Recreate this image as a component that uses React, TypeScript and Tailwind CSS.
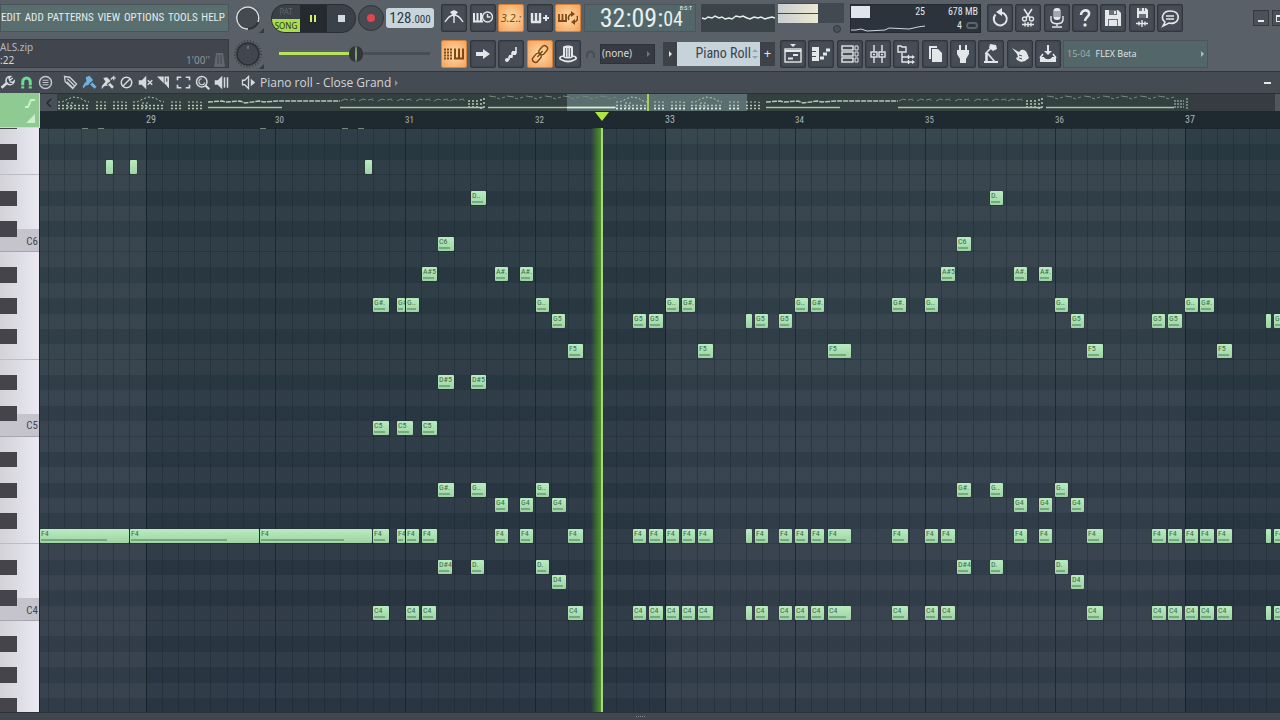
import { useState, type ReactNode } from "react";
import clsx from "clsx";

const NARROW = "font-['Roboto_Condensed','Open_Sans_Condensed','Liberation_Sans_Narrow','DejaVu_Sans_Condensed',sans-serif]";

const MENU = ["EDIT", "ADD", "PATTERNS", "VIEW", "OPTIONS", "TOOLS", "HELP"];

// ---------------------------------------------------------------- icons

function Icon({ children, size = 20, color }: { children: ReactNode; size?: number; color?: string }) {
  return (
    <svg
      width={size}
      height={size}
      viewBox="0 0 20 20"
      fill="none"
      stroke={color ?? "currentColor"}
      strokeWidth="1.4"
      className="shrink-0"
      aria-hidden="true"
    >
      {children}
    </svg>
  );
}

const solid = { fill: "currentColor", stroke: "none" };

const icons = {
  metronome: (
    <Icon>
      <path d="M1 14c3-5 5-7 9-7s6 2 9 7M10 5v10" />
      <path d="M6 4l4-2 4 2-4 5z" {...solid} />
    </Icon>
  ),
  wait: (
    <Icon>
      <path d="M1 5v8M4.500 5v8M8 5v8M0 13.500h10" strokeWidth="2" />
      <circle cx="14.500" cy="9" r="5" />
      <path d="M14.500 6v3h3" />
    </Icon>
  ),
  pianoPlus: (
    <Icon>
      <path d="M2 5v9M6 5v9M10 5v9M1 14h10" strokeWidth="2.4" />
      <path d="M13 10h6M16 7v6" strokeWidth="2" />
    </Icon>
  ),
  pianoLoop: (
    <Icon>
      <path d="M1 6v7M4.500 6v7M8 6v7M0 13h9" strokeWidth="1.800" />
      <path d="M11 12a4 4 0 0 1 3-6M19 8a4 4 0 0 1-3 6" strokeWidth="1.600" />
      <path d="M13 3l4 3-4 3zM17 11l-4 3 4 3z" {...solid} />
    </Icon>
  ),
  typing: (
    <Icon>
      <path d="M0 5.500h9M0 8.500h9M0 11.500h9M0 14.500h9" strokeWidth="2" strokeDasharray="2 1" />
      <path d="M11 4.500v10M15 4.500v10M19 4.500v10M10 14.500h10" strokeWidth="2" />
    </Icon>
  ),
  arrow: (
    <Icon>
      <path d="M3 8h7V5l7 5-7 5v-3H3z" {...solid} />
    </Icon>
  ),
  note: (
    <Icon>
      <path d="M15 3v6h-4v4H8v3" strokeWidth="1.600" />
      <path d="M11 7h4v4h-4zM8 11h3v3H8z" {...solid} />
      <circle cx="6" cy="16" r="2" {...solid} />
    </Icon>
  ),
  link: (
    <Icon>
      <g transform="rotate(-50 10 10)">
        <rect x="0" y="7" width="10" height="6" rx="3" />
        <rect x="10" y="7" width="10" height="6" rx="3" />
        <path d="M6 10h8" />
      </g>
    </Icon>
  ),
  hat: (
    <Icon>
      <path d="M5 13V3c1-2 9-2 10 0v10c-2 2-8 2-10 0z" {...solid} />
      <path d="M7.500 4v9M10 4v9M12.500 4v9" stroke="#474d56" strokeWidth="0.800" />
      <path d="M5 12c-4 1-4 3-1 4 4 2 8 2 12 0 3-1 3-3-1-4" strokeWidth="1.800" />
    </Icon>
  ),
  playlist: (
    <Icon>
      <path d="M7 0h6l-3 3z" {...solid} />
      <rect x="2" y="5" width="16" height="13" />
      <path d="M2 7h16M10 11h5M5 14.500h5" strokeWidth="2" />
    </Icon>
  ),
  pianoRoll: (
    <Icon>
      <path d="M1 3h7v14H1v-4h4v-1H1V8h4V7H1z" {...solid} />
      <path d="M9 14h4M12 10h4M15 6h4" strokeWidth="2.800" />
    </Icon>
  ),
  rack: (
    <Icon>
      <rect x="2" y="2" width="11" height="4" />
      <rect x="2" y="8" width="11" height="4" />
      <rect x="2" y="14" width="11" height="4" />
      <path d="M15 2h3v4h-3zM15 8h3v4h-3zM15 14h3v4h-3z" strokeWidth="1" />
    </Icon>
  ),
  mixer: (
    <Icon>
      <path d="M6 1v18M14 1v18" />
      <rect x="3" y="8" width="6" height="5" fill="#474d56" />
      <rect x="11" y="8" width="6" height="5" fill="#474d56" />
      <path d="M5 10.500h2M13 10.500h2" />
    </Icon>
  ),
  browser: (
    <Icon>
      <path d="M2 2h3l1 1h4v5H2zM6 9v9h5M6 13h5" />
      <path d="M11 13h6M11 18h6M12.500 11v4M12.500 16v4" />
      <path d="M16 11l3 2-3 2zM16 16l3 2-3 2z" {...solid} />
    </Icon>
  ),
  files: (
    <Icon>
      <path d="M4 2h8v2H6v11H4z" {...solid} />
      <path d="M7 5h6l4 4v9H7z" {...solid} />
    </Icon>
  ),
  plug: (
    <Icon>
      <path d="M6 1h2v5h4V1h2v5h2v4l-3 5v4H7v-4l-3-5V6h2z" {...solid} />
    </Icon>
  ),
  piston: (
    <Icon>
      <path d="M9 0l6 1 1 4-4 2-4-3z" {...solid} />
      <path d="M10 4L5 9l2 1 7 8" strokeWidth="1.600" />
      <path d="M5.500 9v8" strokeWidth="2.600" />
      <path d="M3 18h14" strokeWidth="2" />
    </Icon>
  ),
  hand: (
    <Icon>
      <path d="M2 4l7 4 2-2c3-1 5 1 6 3l2 5-4 3-4 1-4-2-1-2 2-1-1-3z" {...solid} />
      <path d="M9 11l3 1M9 14l3 1" stroke="#474d56" strokeWidth="1" />
    </Icon>
  ),
  download: (
    <Icon>
      <path d="M9 1h2v6h3l-4 4-4-4h3z" {...solid} />
      <path d="M5 10l-3 4M15 10l3 4" strokeWidth="1.600" />
      <path d="M2 13h4c1 3 7 3 8 0h4v5H2z" {...solid} />
    </Icon>
  ),
  undo: (
    <Icon>
      <path d="M5.500 6.500a6.500 6.500 0 1 0 6-2" strokeWidth="2" />
      <path d="M12 0v8L6 4z" {...solid} />
    </Icon>
  ),
  scissors: (
    <Icon>
      <path d="M6 1l6 9M14 1l-6 9" strokeWidth="1.600" />
      <circle cx="6.500" cy="11" r="2" />
      <circle cx="13.500" cy="11" r="2" />
      <path d="M4 16.500h12M7 14.500v4M10 14v5M13 14.500v4" />
    </Icon>
  ),
  mic: (
    <Icon>
      <rect x="6.500" y="0" width="7" height="12" rx="3" {...solid} />
      <path d="M4 8v4c1 5 11 5 12 0V8M10 15v3M5 19h10" />
      <path d="M7 4h6M7 6h6M7 8h6" stroke="#474d56" strokeWidth="0.800" />
    </Icon>
  ),
  help: (
    <Icon>
      <path d="M6 7c0-6 9-6 8-1 0 3-4 3-4 7" strokeWidth="2.600" />
      <circle cx="10" cy="17" r="1.700" {...solid} />
    </Icon>
  ),
  save: (
    <Icon>
      <path d="M2 2h13l3 3v13H2z" {...solid} />
      <path d="M6 2h8v5H6zM5 11h10v7H5z" fill="#6b7076" stroke="none" />
      <path d="M11 3h2v3h-2zM6 12h8v6H6z" {...solid} />
    </Icon>
  ),
  saveWave: (
    <Icon>
      <path d="M5 0h9l2 2v8H5z" {...solid} />
      <path d="M7 0h6v3H7zM7 6h7v4H7z" fill="#6b7076" stroke="none" />
      <path d="M10 0h2v3h-2z" {...solid} />
      <path d="M4 15.500h12M7 13.500v4M10 12v7M13 13.500v4" />
    </Icon>
  ),
  chat: (
    <Icon>
      <path d="M5 14C0 10 3 3 10 3s9 4 8 8c-1 4-6 5-9 4l-6 3z" strokeWidth="1.600" />
      <path d="M6 8h8M6 11h8" />
    </Icon>
  ),
};

const tools: { name: string; icon: ReactNode }[] = [
  {
    name: "Options",
    icon: (
      <Icon size={15} color="#d5dadd">
        <path d="M2 17l8-7" strokeWidth="3.500" />
        <path d="M17 4l-4 3-1-3 2-2a5.500 5.500 0 1 0 5 6l-2 2-4-1" strokeWidth="2" />
      </Icon>
    ),
  },
  {
    name: "Snap",
    icon: (
      <Icon size={15} color="#6fdc95">
        <path d="M5 18V9a5 5 0 0 1 10 0v9" strokeWidth="4" />
        <path d="M2 14.500h6M12 14.500h6" stroke="#41474e" strokeWidth="1.200" />
      </Icon>
    ),
  },
  {
    name: "Menu",
    icon: (
      <Icon size={15} color="#c3c8cc">
        <circle cx="10" cy="10" r="8" strokeWidth="2" />
        <path d="M6 7h8M6 10h8M6 13h8" strokeWidth="1.600" />
      </Icon>
    ),
  },
  {
    name: "Draw",
    icon: (
      <Icon size={15} color="#ccd1d5">
        <path d="M2 2l7 1 9 9-5 6-10-9zM5 9l8 8M6 5l9 9" strokeWidth="1.800" />
      </Icon>
    ),
  },
  {
    name: "Paint",
    icon: (
      <Icon size={15} color="#6fb3dc">
        <path d="M5 3l5-2 5 6-1 4-3 2-6 1-3 4-1-3 3-5 2-1z" fill="#6fb3dc" stroke="none" />
        <path d="M12 11l6 6" strokeWidth="4" />
        <path d="M9 13l7-6" stroke="#41474e" />
      </Icon>
    ),
  },
  {
    name: "Paint drum sequence",
    icon: (
      <Icon size={15} color="#d5dadd">
        <path d="M3 4l5-1 5 5-1 4-3 2-5 1-3 4v-4l3-4 2-2z" fill="#d5dadd" stroke="none" />
        <path d="M11 12l5 5" strokeWidth="3.500" />
        <path d="M8 13l6-5" stroke="#41474e" />
        <path d="M13 6l3-3M14 4h6M17 1v6" strokeWidth="1.600" />
      </Icon>
    ),
  },
  {
    name: "Delete",
    icon: (
      <Icon size={15} color="#d5dadd">
        <circle cx="10" cy="10" r="7" strokeWidth="2" />
        <path d="M5 15L15 5" strokeWidth="2" />
      </Icon>
    ),
  },
  {
    name: "Mute",
    icon: (
      <Icon size={15} color="#d5dadd">
        <path d="M1 7h4l6-6v18l-6-6H1z" fill="#d5dadd" stroke="none" />
        <path d="M13 7l6 6M19 7l-6 6" strokeWidth="2" />
      </Icon>
    ),
  },
  {
    name: "Slice",
    icon: (
      <Icon size={15} color="#d5dadd">
        <path d="M0 2h9v9z" fill="#d5dadd" stroke="none" />
        <path d="M10 2h6v16l-6-7z" fill="#d5dadd" stroke="none" />
        <path d="M13 4v5" stroke="#41474e" />
      </Icon>
    ),
  },
  {
    name: "Select",
    icon: (
      <Icon size={15} color="#d5dadd">
        <path d="M2 7V3h5M13 3h5v4M18 13v4h-5M7 17H2v-4" strokeWidth="2.200" />
      </Icon>
    ),
  },
  {
    name: "Zoom",
    icon: (
      <Icon size={15} color="#d5dadd">
        <circle cx="9" cy="9" r="7" strokeWidth="2" />
        <path d="M14 14l5 5" strokeWidth="3" />
        <path d="M9 5a4 4 0 1 0 4 5" strokeWidth="1.400" />
      </Icon>
    ),
  },
  {
    name: "Playback",
    icon: (
      <Icon size={15} color="#d5dadd">
        <path d="M1 7h4l6-6v18l-6-6H1z" fill="#d5dadd" stroke="none" />
        <path d="M14 3v14M18 3v14" strokeWidth="2" />
      </Icon>
    ),
  },
];

// ---------------------------------------------------------------- toolbar pieces

function ToolButton({ label, active, children }: { label: string; active?: boolean; children: ReactNode }) {
  return (
    <button
      type="button"
      aria-label={label}
      className={clsx(
        "flex h-7 w-[26px] items-center justify-center rounded-[2px] border",
        active
          ? "border-[#d9823a] bg-radial from-[#ffdcaa] to-[#f3a25a] text-[#7c4a16]"
          : "border-[#31363d] bg-[#474d56] text-[#e3e7ea] shadow-[inset_0_0_2px_#2c3138]"
      )}
    >
      {children}
    </button>
  );
}

function Knob({ ring }: { ring?: boolean }) {
  return (
    <div className="flex w-[38px] shrink-0 justify-center">
      <svg width="32" height="32" viewBox="0 0 32 32" aria-hidden="true">
        {ring ? (
          <>
            <circle cx="16" cy="16" r="11" fill="#444a52" stroke="#2f343a" strokeWidth="2" />
            <path d="M16 27A11 11 0 1 1 26 20" fill="none" stroke="#d8dde0" strokeWidth="1.500" />
          </>
        ) : (
          <>
            <circle cx="16" cy="16" r="13" fill="none" stroke="#3c4249" strokeWidth="2" strokeDasharray="1 2" />
            <circle cx="16" cy="16" r="11" fill="#40464e" stroke="#2b3036" strokeWidth="1.500" />
            <path d="M16 8v3" stroke="#8c949a" />
          </>
        )}
        <path d="M32 26v5h-5z" fill="#363b42" />
      </svg>
    </div>
  );
}

function TransportRow() {
  const [mode, setMode] = useState<"PAT" | "SONG">("SONG");

  return (
    <div className="flex h-9 items-center">
      <nav
        className={`flex h-7 w-[229px] shrink-0 items-center justify-between border border-[#4a5659] bg-[#596e6e] pr-[3px] text-[11px] text-[#e4eceb] ${NARROW}`}
      >
        {MENU.map((m) => (
          <button key={m} type="button">
            {m}
          </button>
        ))}
      </nav>
      <Knob ring />
      <div className="flex w-[170px] shrink-0 items-center gap-[2px] pl-1">
        <div className="flex h-[29px] w-[85px] overflow-hidden rounded-[14px] border border-[#2a2f35] bg-[#3b4148]">
          <div className="flex w-7 flex-col text-[8px] leading-[13px]">
            <button type="button" className="h-[14px] text-[#5d646b]" onClick={() => setMode("PAT")}>
              PAT
            </button>
            <button
              type="button"
              className={clsx("h-[13px]", mode === "SONG" ? "bg-[#a9dd4c] text-[#26341a]" : "text-[#5d646b]")}
              onClick={() => setMode("SONG")}
            >
              SONG
            </button>
          </div>
          <button type="button" aria-label="Pause" className="flex w-[26px] items-center justify-center gap-[2px] bg-[#252a30]">
            <span className="h-[7px] w-[2px] bg-[#d4ee6a]" />
            <span className="h-[7px] w-[2px] bg-[#d4ee6a]" />
          </button>
          <button type="button" aria-label="Stop" className="flex flex-1 items-center justify-center border-l border-[#252a30]">
            <span className="size-[7px] bg-[#d3dae2]" />
          </button>
        </div>
        <button
          type="button"
          aria-label="Record"
          className="flex size-[26px] items-center justify-center rounded-full border border-[#2f343a] bg-[#474c53]"
        >
          <span className="size-2 rounded-full bg-[#e0474c]" />
        </button>
        <button
          type="button"
          aria-label="Tempo"
          className={`flex h-5 w-12 items-baseline justify-center rounded-[3px] bg-[#c9d5dc] text-[15px] leading-5 text-[#303a44] ${NARROW}`}
        >
          128<span className="text-[11px]">.000</span>
        </button>
      </div>
      <div className="ml-1 flex w-[140px] shrink-0 justify-between">
        <ToolButton label="Metronome">{icons.metronome}</ToolButton>
        <ToolButton label="Wait for input">{icons.wait}</ToolButton>
        <ToolButton label="Countdown" active>
          <span className="text-[11px] italic">3.2.:</span>
        </ToolButton>
        <ToolButton label="Overdub">{icons.pianoPlus}</ToolButton>
        <ToolButton label="Loop record" active>
          {icons.pianoLoop}
        </ToolButton>
      </div>
      <div
        className={`relative ml-[3px] flex h-7 w-[112px] shrink-0 items-end justify-end border border-[#4a5659] bg-[#53676a] pr-3 text-[26px] leading-[26px] text-[#e6eeee] ${NARROW}`}
      >
        32:09:<span className="text-[20px] leading-6">04</span>
        <span className="absolute top-0 right-[3px] text-[6px] leading-[6px]">B:S:T</span>
      </div>
      <svg width="74" height="28" viewBox="0 0 74 28" className="ml-[5px] shrink-0 bg-[#3b4549]" aria-hidden="true">
        <path
          d="M1 14l3 1 3-2 4 1 3-2 4 2 3-1 3 2 4-1 3 1 4-3 4 1 3-1 4 2 3 1 4-2 4 1 3-1 4 2 3-1 4-1 3 1"
          fill="none"
          stroke="#e8eeee"
          strokeWidth="1.500"
        />
      </svg>
      <div className="ml-[3px] flex h-[30px] w-[66px] shrink-0 flex-col items-end justify-between">
        <div className="flex h-5 w-full flex-col gap-px bg-[#434950] pt-px">
          <span className="h-[9px] w-10 bg-linear-to-r from-[#c9cdd0] to-[#ece8d2]" />
          <span className="h-[9px] w-10 bg-linear-to-r from-[#c9cdd0] to-[#ece8d2]" />
        </div>
        <span className="mr-[3px] size-2 rounded-full border border-[#33383f] bg-[#4b5158]" />
      </div>
      <div
        className={`ml-[6px] flex h-[29px] w-[131px] shrink-0 border border-[#232931] bg-[#2c333c] text-[10px] leading-[14px] text-[#e3e8ec] ${NARROW}`}
      >
        <div className="flex flex-1 flex-col justify-between">
          <div className="flex justify-between">
            <span className="mt-px h-3 w-[19px] bg-[#dfe4ee]" />
            <span>25</span>
          </div>
          <svg width="74" height="8" viewBox="0 0 74 8" aria-hidden="true">
            <path d="M0 6h5l5-1 6 2 18-1 4-2 20 1 9-2 7-1" fill="none" stroke="#cfd6db" />
          </svg>
        </div>
        <div className="flex w-[55px] flex-col items-end pr-[2px]">
          <span>678 MB</span>
          <span className="flex items-center gap-1">
            4
            <span className="h-[7px] w-3 rounded-full border-2 border-[#5c636a]" />
          </span>
        </div>
      </div>
      <div className="ml-[6px] flex w-[196px] shrink-0 justify-between">
        <ToolButton label="Undo">{icons.undo}</ToolButton>
        <ToolButton label="Cut">{icons.scissors}</ToolButton>
        <ToolButton label="Record audio">{icons.mic}</ToolButton>
        <ToolButton label="Help">{icons.help}</ToolButton>
        <ToolButton label="Save">{icons.save}</ToolButton>
        <ToolButton label="Render">{icons.saveWave}</ToolButton>
        <ToolButton label="Feedback">{icons.chat}</ToolButton>
      </div>
      <div className="ml-[70px] flex shrink-0 gap-[3px]">
        <button type="button" aria-label="Minimize" className="flex size-4 items-end justify-center border border-[#353a41] bg-[#4b5159] pb-[3px]">
          <span className="h-[2px] w-[6px] bg-[#e8ecef]" />
        </button>
        <button type="button" aria-label="Maximize" className="flex size-4 items-center justify-center border border-[#353a41] bg-[#4b5159]">
          <span className="h-[7px] w-2 border border-t-2 border-[#e8ecef]" />
        </button>
      </div>
    </div>
  );
}

function PanelRow() {
  return (
    <div className="flex h-[35px] items-center">
      <div className="flex h-[29px] w-[229px] shrink-0 items-end justify-between border border-l-0 border-[#363b41] bg-[#41464e] pr-[3px] text-[10px] leading-[13px]">
        <div>
          <div className="text-[#b3b8bc]">ALS.zip</div>
          <div className="text-[#d3d7da]">:22</div>
        </div>
        <div className="flex items-end gap-1 text-[#8d9398]">
          1'00''
          <svg width="11" height="14" viewBox="0 0 11 14" fill="#61676e" aria-hidden="true">
            <path d="M2 0h7l2 14H0z" />
            <path d="M4 2v9M7 2v9" stroke="#41464e" />
          </svg>
        </div>
      </div>
      <Knob />
      <div className="flex w-[170px] shrink-0 items-center pl-3">
        <input
          type="range"
          aria-label="Main pitch"
          defaultValue={51}
          className="h-[3px] w-[151px] appearance-none bg-linear-to-r from-[#b9e35c] from-50% to-[#484e55] to-50% [&::-webkit-slider-thumb]:h-4 [&::-webkit-slider-thumb]:w-[14px] [&::-webkit-slider-thumb]:appearance-none [&::-webkit-slider-thumb]:rounded-full [&::-webkit-slider-thumb]:border-x-[6px] [&::-webkit-slider-thumb]:border-[#30363a] [&::-webkit-slider-thumb]:bg-[#7fa56a]"
        />
      </div>
      <div className="ml-1 flex w-[140px] shrink-0 justify-between">
        <ToolButton label="Typing keyboard" active>
          {icons.typing}
        </ToolButton>
        <ToolButton label="Step edit">{icons.arrow}</ToolButton>
        <ToolButton label="Note editing">{icons.note}</ToolButton>
        <ToolButton label="Multilink" active>
          {icons.link}
        </ToolButton>
        <ToolButton label="Talk">{icons.hat}</ToolButton>
      </div>
      <svg width="19" height="20" viewBox="0 0 19 20" fill="none" stroke="#474d54" strokeWidth="2" className="shrink-0" aria-hidden="true">
        <path d="M6 14v-3a3.500 3.500 0 0 1 7 0v3" />
      </svg>
      <div className="flex h-5 w-[55px] shrink-0 items-center border border-[#2d3238] bg-[#363b43] pr-1 pl-px">
        <select aria-label="Snap" className="min-w-0 flex-1 appearance-none text-[10px] text-[#d5d9dc]">
          <option>(none)</option>
        </select>
        <span className="border-y-[3px] border-l-[3px] border-y-transparent border-l-[#727980]" />
      </div>
      <button type="button" aria-label="Previous pattern" className="ml-2 flex h-6 w-[14px] shrink-0 items-center justify-center bg-[#3d4249]">
        <span className="border-y-[3px] border-l-[3px] border-y-transparent border-l-[#e1e5e8]" />
      </button>
      <div className="flex h-6 w-[83px] shrink-0 items-center bg-[#c6d3da] pr-[2px]">
        <select
          aria-label="Pattern"
          className={`min-w-0 flex-1 appearance-none pr-px text-right [text-align-last:right] text-[14px] text-[#38434c] ${NARROW}`}
        >
          <option>Piano Roll</option>
        </select>
        <span className="flex flex-col gap-1">
          <span className="border-x-[3px] border-b-[3px] border-x-transparent border-b-[#93a4ae]" />
          <span className="border-x-[3px] border-t-[3px] border-x-transparent border-t-[#93a4ae]" />
        </span>
      </div>
      <button type="button" aria-label="Add pattern" className="flex h-6 w-[15px] shrink-0 items-center justify-center bg-[#3d4249] text-[13px] text-[#e1e5e8]">
        +
      </button>
      <div className="ml-[5px] flex w-[281px] shrink-0 justify-between">
        <ToolButton label="Playlist">{icons.playlist}</ToolButton>
        <ToolButton label="Piano roll">{icons.pianoRoll}</ToolButton>
        <ToolButton label="Channel rack">{icons.rack}</ToolButton>
        <ToolButton label="Mixer">{icons.mixer}</ToolButton>
        <ToolButton label="Browser">{icons.browser}</ToolButton>
        <ToolButton label="Project picker">{icons.files}</ToolButton>
        <ToolButton label="Plugin picker">{icons.plug}</ToolButton>
        <ToolButton label="Tempo tapper">{icons.piston}</ToolButton>
        <ToolButton label="Touch">{icons.hand}</ToolButton>
        <ToolButton label="Download">{icons.download}</ToolButton>
      </div>
      <a
        href="#news"
        className="ml-[2px] flex h-7 w-[145px] shrink-0 items-center gap-[5px] border border-[#4a5659] bg-[#53666a] px-[3px] font-['Open_Sans',sans-serif] text-[9px] text-[#e0e8e8]"
      >
        <span className="text-[#a3b0b1]">15-04</span>
        FLEX Beta
        <span className="ml-auto border-y-[3px] border-l-[3px] border-y-transparent border-l-[#aebbbb]" />
      </a>
    </div>
  );
}

// ---------------------------------------------------------------- overview strip

const DOT_GROUP = [
  [0, 31, true],
  [38, 50, false],
  [55, 70, false],
  [75, 106, true],
  [113, 125, false],
  [130, 145, false],
] as const;

function OverviewLoop({ x }: { x: number }) {
  return (
    <g transform={`translate(${x} 0)`}>
      {DOT_GROUP.map(([a, b, arc]) => (
        <g key={a} strokeDasharray="2 2">
          {arc ? (
            <path d={`M${a} 8h4l6-3 5-2 7 1 5 3 4 1M${a + 10} 8v6m4-6v6`} />
          ) : (
            <path d={`M${a} 8H${b - 3}l3 1`} />
          )}
          <path d={`M${a} 11.500H${b}M${a} 14.500H${b}`} strokeWidth="1.500" />
        </g>
      ))}
      <path d="M150 8l14-1 4 1 14-1 5 2 14-2 5 1 14-1h62" strokeWidth="1.500" strokeDasharray="5 1" />
      <path d="M150 13.500h74M282 13.500h144M430 13.500h128" stroke="#a6c7a2" strokeWidth="1.500" />
      <g stroke="#74877a">
        {[283, 301, 320, 339, 358, 376, 392].map((s) => (
          <path key={s} d={`M${s} 7l4-2 3 1m2 0l5-1m0 1v1`} />
        ))}
        {[431, 449, 468, 487, 505, 524, 542].map((s) => (
          <path key={s} d={`M${s} 2l7 1m1 1l3 1m2-1l3-1`} />
        ))}
      </g>
      <path d="M410 7h10M410 10h10M410 13h10M423 5v10M426 4v11" strokeWidth="1.500" strokeDasharray="2 2" />
    </g>
  );
}

function Overview() {
  return (
    <div className="flex h-[18px] border-t border-[#2c3338] bg-[#33403f]">
      <button type="button" aria-label="Scroll left" className="flex w-[17px] shrink-0 items-center justify-center bg-[#4a5058]">
        <svg width="6" height="10" viewBox="0 0 6 10" fill="none" stroke="#242a2f" strokeWidth="1.500" aria-hidden="true">
          <path d="M5 1L1 5l4 4" />
        </svg>
      </button>
      <svg height="17" className="min-w-0 flex-1" fill="none" stroke="#b3cab4" strokeWidth="1" aria-hidden="true">
        <rect x="510" y="0" width="180" height="17" fill="#5b6f70" stroke="none" />
        <rect x="1132" y="0" width="146" height="17" fill="#363c42" stroke="none" />
        <rect x="1218" y="0" width="60" height="17" fill="#50565e" stroke="none" />
        <OverviewLoop x={1} />
        <OverviewLoop x={559} />
        <path d="M510 13.500h48" stroke="#e2efdc" strokeWidth="1.500" />
        <path d="M559 14.500h31M597 14.500h12M614 14.500h15M634 14.500h31M672 14.500h12" stroke="#e6efe6" strokeWidth="1.500" strokeDasharray="2 2" />
        <path d="M1117 7h10M1117 10h10M1117 13h10M1130 4v11" strokeDasharray="2 1" />
        <path d="M591 0v17" stroke="#a5d152" strokeWidth="2" />
      </svg>
    </div>
  );
}

// ---------------------------------------------------------------- piano roll

const ROW = 15.375;
const BAR = 129.875;
const TOP_PITCH = 31; // semitones above C4
const LOW_PITCH = -6;
const PLAYHEAD = 561;

// y of the upper edge of a pitch row, inside the grid
const rowTop = (pitch: number) => Math.round(1 + (TOP_PITCH - pitch) * ROW);
// x of a bar line, inside the grid
const barX = (bar: number) => Math.floor(106 + (bar - 29) * BAR);

const BLACK = [1, 3, 6, 8, 10];
const mod12 = (n: number) => ((n % 12) + 12) % 12;

const PITCHES = Array.from({ length: TOP_PITCH - LOW_PITCH + 1 }, (_, i) => TOP_PITCH - i);

type Note = [x: number, width: number, label: string];

const NOTES: Record<number, Note[]> = {
  29: [[66, 7, ""], [90, 7, ""], [325, 7, ""]],
  27: [[431, 15, "D.."], [950, 13, "D."]],
  24: [[398, 16, "C6"], [917, 14, "C6"]],
  22: [[382, 15, "A#5"], [455, 13, "A#."], [480, 13, "A#."], [901, 14, "A#5"], [974, 13, "A#."], [999, 13, "A#."]],
  20: [
    [333, 16, "G#."], [357, 8, "G#"], [366, 13, "G.."], [496, 13, "G.."], [626, 13, "G.."], [642, 13, "G#."],
    [755, 13, "G.."], [771, 13, "G#."], [852, 14, "G#."], [885, 13, "G.."], [1015, 13, "G.."], [1145, 13, "G.."], [1160, 14, "G#."],
  ],
  19: [
    [512, 13, "G5"], [593, 13, "G5"], [609, 14, "G5"], [706, 6, ""], [715, 13, "G5"], [739, 13, "G5"],
    [1031, 13, "G5"], [1112, 13, "G5"], [1128, 14, "G5"], [1226, 5, ""], [1234, 13, "G5"],
  ],
  17: [[528, 15, "F5"], [658, 15, "F5"], [788, 23, "F5"], [1047, 16, "F5"], [1177, 15, "F5"]],
  15: [[398, 16, "D#5"], [431, 15, "D#5"]],
  12: [[333, 16, "C5"], [357, 16, "C5"], [382, 15, "C5"]],
  8: [[398, 16, "G#."], [431, 15, "G.."], [496, 13, "G.."], [917, 14, "G#."], [950, 13, "G.."], [1015, 13, "G.."]],
  7: [[455, 13, "G4"], [480, 13, "G4"], [512, 14, "G4"], [974, 13, "G4"], [999, 13, "G4"], [1031, 13, "G4"]],
  5: [
    [0, 89, "F4"], [90, 129, "F4"], [220, 112, "F4"], [333, 16, "F4"], [357, 8, "F4"], [366, 13, "F4"], [382, 15, "F4"],
    [455, 13, "F4"], [480, 13, "F4"], [528, 15, "F4"],
    [593, 13, "F4"], [609, 14, "F4"], [626, 13, "F4"], [642, 13, "F4"], [658, 15, "F4"], [706, 6, ""], [715, 13, "F4"],
    [739, 13, "F4"], [755, 13, "F4"], [771, 13, "F4"], [788, 23, "F4"], [852, 16, "F4"], [885, 13, "F4"], [901, 14, "F4"],
    [974, 13, "F4"], [999, 13, "F4"], [1047, 16, "F4"], [1112, 14, "F4"], [1128, 14, "F4"], [1145, 13, "F4"],
    [1160, 14, "F4"], [1177, 15, "F4"], [1226, 5, ""], [1234, 13, "F4"],
  ],
  3: [[398, 14, "D#4"], [431, 13, "D."], [496, 13, "D."], [917, 14, "D#4"], [950, 13, "D."], [1015, 13, "D."]],
  2: [[512, 14, "D4"], [1031, 13, "D4"]],
  0: [
    [333, 16, "C4"], [366, 13, "C4"], [382, 14, "C4"], [528, 15, "C4"],
    [593, 13, "C4"], [609, 14, "C4"], [626, 13, "C4"], [642, 13, "C4"], [658, 15, "C4"], [706, 6, ""], [715, 13, "C4"],
    [739, 13, "C4"], [755, 13, "C4"], [771, 13, "C4"], [788, 23, "C4"], [852, 16, "C4"], [885, 13, "C4"], [901, 14, "C4"],
    [1047, 16, "C4"], [1112, 14, "C4"], [1128, 14, "C4"], [1145, 13, "C4"], [1160, 14, "C4"], [1177, 15, "C4"],
    [1226, 5, ""], [1234, 13, "C4"],
  ],
};

function Keyboard() {
  return (
    <div className="h-full w-10 shrink-0 overflow-hidden border-r border-[#20272c] bg-linear-to-r from-[#d2d2d8] to-[#eae9f2]">
      <div className="h-px w-[17px] bg-[#45444b]" />
      {PITCHES.map((p) => {
        const n = mod12(p);
        return (
          <div key={p} className="flex" style={{ height: rowTop(p - 1) - rowTop(p) }}>
            {BLACK.includes(n) && <div className="w-[17px] bg-[#45444b]" />}
            <div
              className={clsx(
                "flex flex-1 items-start justify-end pr-px text-[11px] leading-[10px] text-[#45454c]",
                NARROW,
                n === 0 && "border-b border-[#a5a5ac] bg-[#c5c4cc]",
                n === 1 && "bg-linear-to-b from-transparent from-50% to-[#c5c4cc] to-50%",
                n === 5 && "border-b border-[#bdbdc5]"
              )}
            >
              {n === 0 && `C${4 + p / 12}`}
            </div>
          </div>
        );
      })}
    </div>
  );
}

function Ruler() {
  return (
    <div className={`relative h-[17px] overflow-hidden bg-[#1f2930] text-[#aab5bb] ${NARROW}`}>
      {[29, 30, 31, 32, 33, 34, 35, 36, 37].map((bar) => (
        <span
          key={bar}
          className={clsx("absolute top-[2px] leading-[14px]", bar % 4 === 1 ? "text-[10px]" : "text-[9px]")}
          style={{ left: barX(bar) }}
        >
          {bar}
        </span>
      ))}
      <span
        className="absolute top-px border-x-[7px] border-t-[9px] border-x-transparent border-t-[#aee83f]"
        style={{ left: PLAYHEAD - 6 }}
      />
    </div>
  );
}

function Grid() {
  const steps = Array.from({ length: 80 }, (_, i) => 28 + i / 8);
  return (
    <div className="relative min-w-0 flex-1 overflow-hidden bg-linear-to-b from-[#283840] to-[#293542]">
      <div className="h-px bg-[#1d272d]" />
      {PITCHES.map((p) => (
        <div
          key={p}
          className={clsx(
            !BLACK.includes(mod12(p)) && "bg-white/4",
            [0, 5].includes(mod12(p)) && "border-b border-black/15"
          )}
          style={{ height: rowTop(p - 1) - rowTop(p) }}
        />
      ))}

      {/* every other group of four bars is a shade lighter */}
      <div className="absolute inset-y-0 left-0 bg-white/4" style={{ width: barX(29) }} />
      <div className="absolute inset-y-0 bg-white/4" style={{ left: barX(33), width: barX(37) - barX(33) }} />

      {steps.map((s) => (
        <div
          key={s}
          className={clsx(
            "absolute inset-y-0 w-px",
            s % 4 === 1 ? "bg-[#17232a]" : s % 1 === 0 ? "bg-[#17232a]/80" : "bg-[#1a272e]/40"
          )}
          style={{ left: barX(s) }}
        />
      ))}

      {/* tails of notes above the visible range */}
      {[42, 58, 220, 302, 318].map((x) => (
        <div key={x} className="absolute top-0 h-px w-[6px] bg-[#6f8a7c]" style={{ left: x }} />
      ))}

      {Object.entries(NOTES).map(([pitch, notes]) =>
        notes.map(([x, w, label]) => (
          <div
            key={`${pitch}-${x}`}
            className={`absolute h-[14px] overflow-hidden rounded-[1px] bg-linear-to-b from-[#b9ecc0] to-[#9ed3a4] pl-px text-[8px] leading-[10px] whitespace-nowrap text-[#3d6c47] shadow-[0_0_1px_#16211f] ${NARROW}`}
            style={{ left: x, top: rowTop(Number(pitch)), width: w }}
          >
            {label}
            {label && <div className="h-[2px] w-3/4 bg-[#75aa7e]" />}
          </div>
        ))
      )}

      <div
        className="absolute inset-y-0 w-[10px] bg-linear-to-r from-transparent to-[#4f9427]"
        style={{ left: PLAYHEAD - 10 }}
      />
      <div className="absolute inset-y-0 w-[2px] bg-[#a8d586]" style={{ left: PLAYHEAD }} />
    </div>
  );
}

export default function App() {
  return (
    <div className="flex h-screen flex-col overflow-hidden bg-[#41474e] font-['Noto_Sans',sans-serif] select-none">
      <header className="shrink-0 overflow-hidden border-b border-[#31363c] bg-[#5a6068]">
        <TransportRow />
        <PanelRow />
      </header>

      <div className="flex h-[21px] shrink-0 items-center overflow-hidden bg-[#454b53]">
        <div className="flex w-[229px] justify-between">
          {tools.map((t, i) => (
            <button key={t.name} type="button" aria-label={t.name} className={clsx(i === 3 && "ml-[6px]")}>
              {t.icon}
            </button>
          ))}
        </div>
        <div className="ml-3 flex flex-1 items-center gap-1 font-['Open_Sans',sans-serif] text-[12px] leading-4 text-[#d2d6d9]">
          <Icon size={15} color="#d5dadd">
            <path d="M2 7h3l5-5v16l-5-5H2z" strokeWidth="1.800" />
            <path d="M13 5l6 5-6 5z" fill="#d5dadd" stroke="none" />
          </Icon>
          Piano roll - Close Grand
          <span className="border-y-[3px] border-l-[3px] border-y-transparent border-l-[#8a9096]" />
        </div>
        <button type="button" aria-label="Minimize piano roll" className="mr-[9px]">
          <span className="block h-[2px] w-[7px] bg-[#e3e7ea]" />
        </button>
      </div>

      <div className="flex h-[35px] shrink-0">
        <div className="flex w-10 shrink-0 flex-col items-end justify-between border-r border-b border-[#bfe8bf] bg-[#8fca92] px-1 pt-[6px] pb-1">
          <svg width="10" height="9" viewBox="0 0 10 9" fill="none" stroke="#c9f0c8" strokeWidth="2" aria-hidden="true">
            <path d="M0 8h3l3-7h4" />
          </svg>
          <svg width="9" height="9" viewBox="0 0 9 9" fill="#c9f0c8" aria-hidden="true">
            <path d="M9 0v9H0z" />
          </svg>
        </div>
        <div className="flex min-w-0 flex-1 flex-col">
          <Overview />
          <Ruler />
        </div>
      </div>

      <main className="flex min-h-0 flex-1">
        <Keyboard />
        <Grid />
      </main>

      <footer className="flex h-2 shrink-0 items-center justify-center gap-px border-t border-[#2c3237] bg-[#41474e]">
        {[0, 1, 2, 3, 4].map((d) => (
          <span key={d} className="size-px bg-[#868c92]" />
        ))}
      </footer>
    </div>
  );
}
